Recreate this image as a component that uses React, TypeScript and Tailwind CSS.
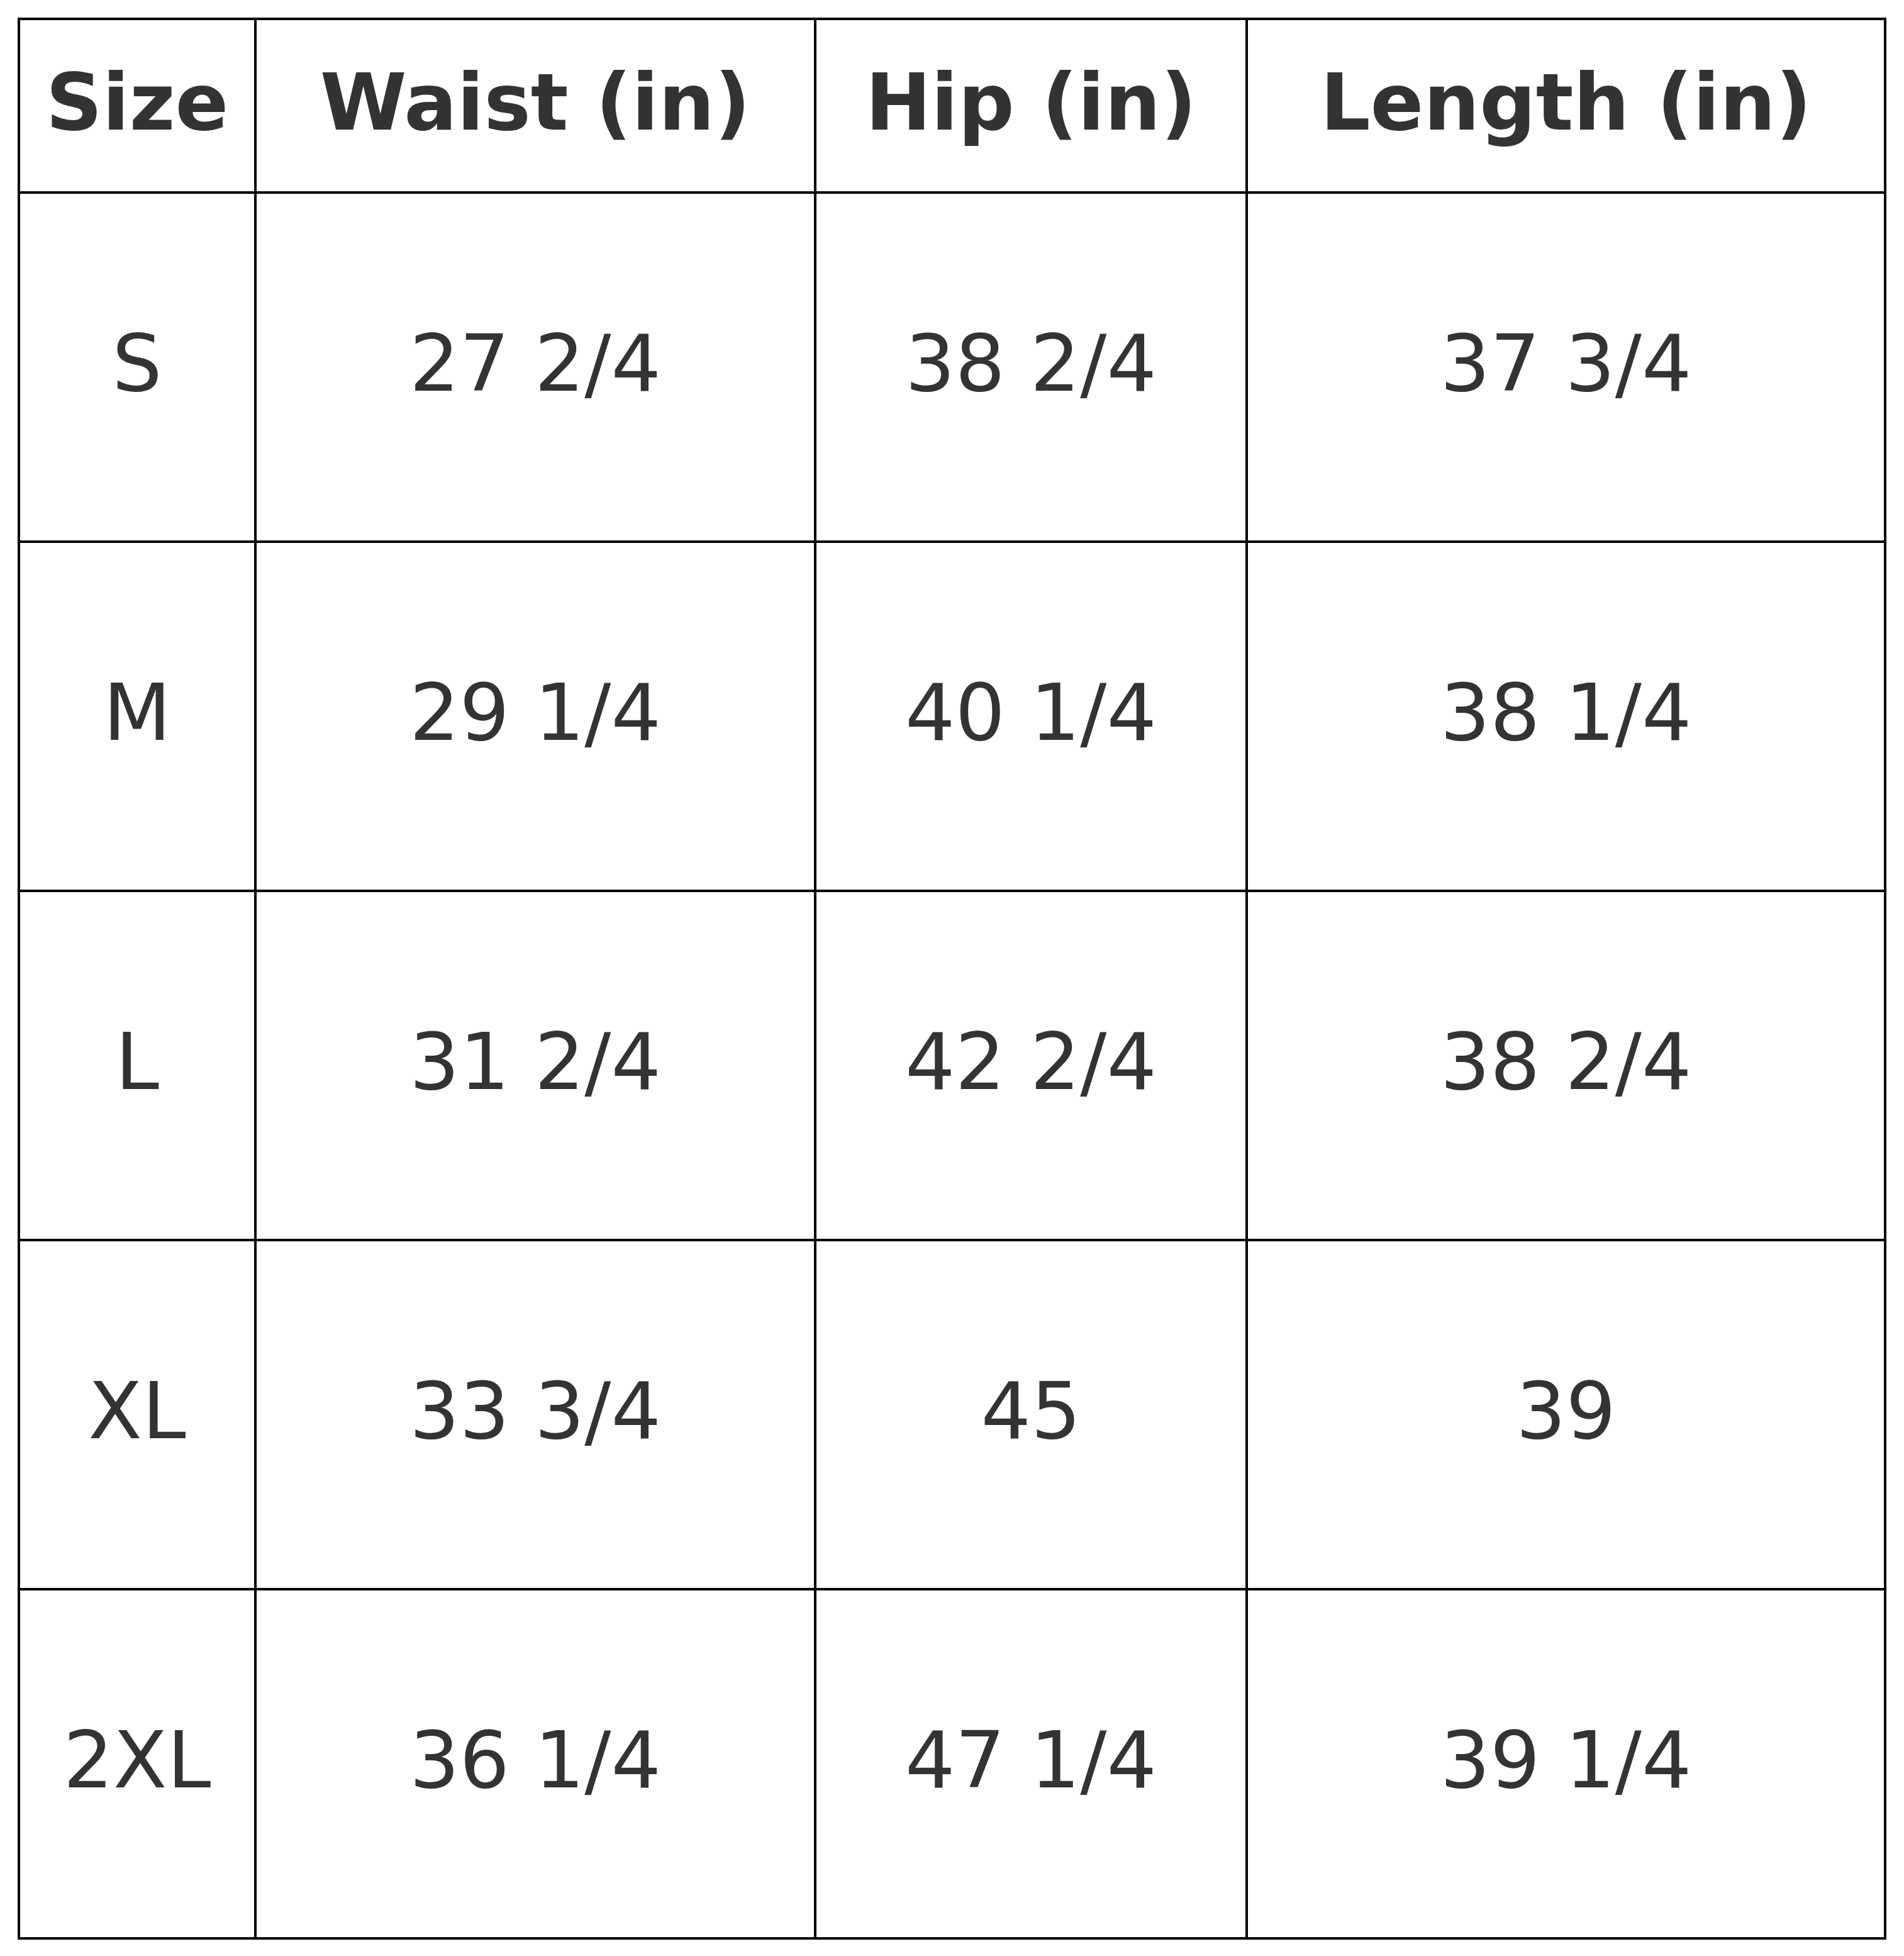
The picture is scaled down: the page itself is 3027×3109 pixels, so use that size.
const headers = ["Size", "Waist (in)", "Hip (in)", "Length (in)"];

const rows: string[][] = [
  ["S", "27 2/4", "38 2/4", "37 3/4"],
  ["M", "29 1/4", "40 1/4", "38 1/4"],
  ["L", "31 2/4", "42 2/4", "38 2/4"],
  ["XL", "33 3/4", "45", "39"],
  ["2XL", "36 1/4", "47 1/4", "39 1/4"],
];

export default function App() {
  return (
    <div className="min-h-screen w-[3027px] bg-white pt-[28px] pl-[28px] font-['DejaVu_Sans',sans-serif] text-[#333333]">
      <div className="grid w-fit grid-cols-[372px_886px_682px_1011px] grid-rows-[272px_repeat(5,551px)] gap-[4px] bg-black p-[4px]">
        {headers.map((h) => (
          <div key={h} className="flex items-center justify-center bg-white pb-[12px] text-[125px] font-bold leading-none whitespace-nowrap">
            {h}
          </div>
        ))}
        {rows.map((row, i) =>
          row.map((cell, j) => (
            <div key={`${i}-${j}`} className="flex items-center justify-center bg-white pb-[13px] text-[125px] leading-none whitespace-nowrap">
              {cell}
            </div>
          ))
        )}
      </div>
    </div>
  );
}
